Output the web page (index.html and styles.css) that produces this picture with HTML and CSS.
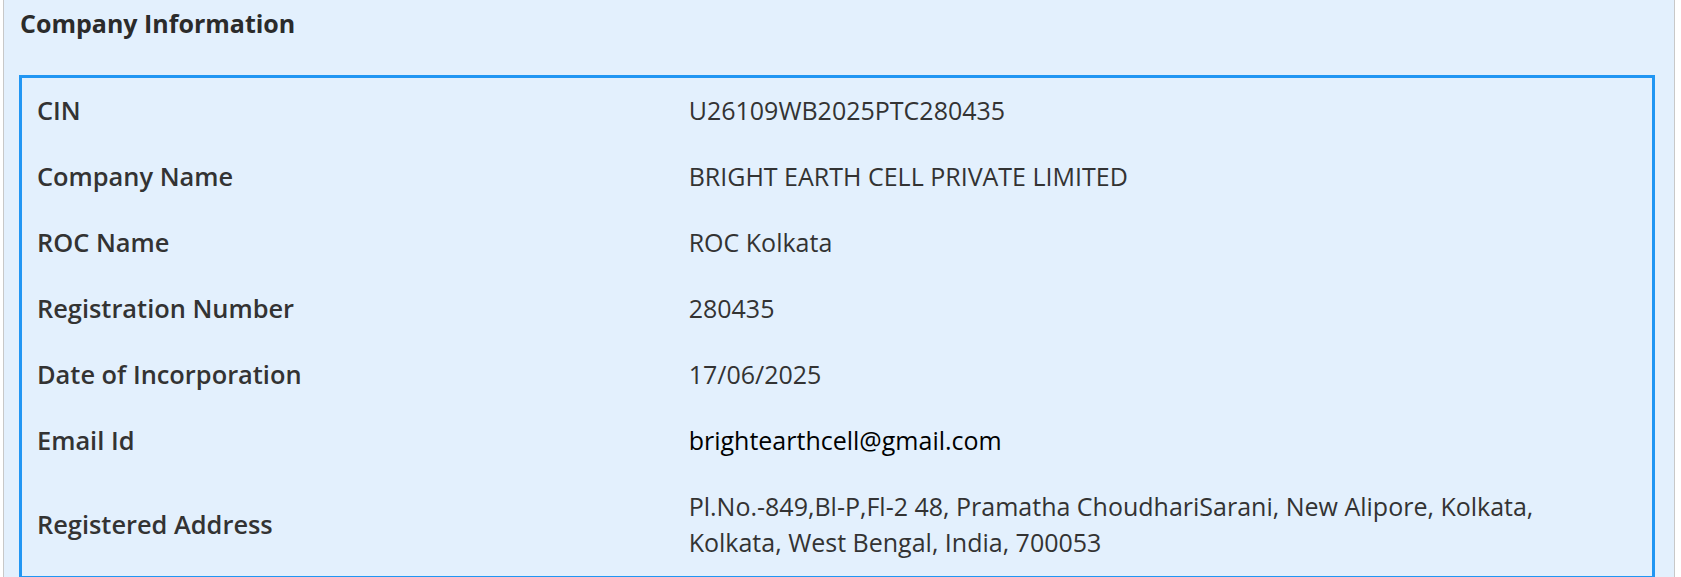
FILE: index.html
```html
<!DOCTYPE html>
<html lang="en">
<head>
  <meta charset="UTF-8">
  <title>Company Information</title>
  <link rel="stylesheet" href="styles.css">
</head>
<body>
<div class="panel">
  <h2 class="panel-title">Company Information</h2>
  <table class="info-table">
    <tr><th>CIN</th><td>U26109WB2025PTC280435</td></tr>
    <tr><th>Company Name</th><td>BRIGHT EARTH CELL PRIVATE LIMITED</td></tr>
    <tr><th>ROC Name</th><td>ROC Kolkata</td></tr>
    <tr><th>Registration Number</th><td>280435</td></tr>
    <tr><th>Date of Incorporation</th><td>17/06/2025</td></tr>
    <tr><th>Email Id</th><td class="email">brightearthcell@gmail.com</td></tr>
    <tr><th>Registered Address</th><td>Pl.No.-849,Bl-P,Fl-2 48, Pramatha ChoudhariSarani, New Alipore, Kolkata, Kolkata, West Bengal, India, 700053</td></tr>
  </table>
</div>
</body>
</html>
```

FILE: styles.css
```css
body {
  margin: 0;
  font-family: "Open Sans", sans-serif;
  background-color: #ffffff;
}
.panel {
  margin: 0 6px 0 3px;
  padding: 7px 19px 20px 15px;
  background-color: #e3f0fd;
  border-left: 1px solid #c8c8c8;
  border-right: 1px solid #c8c8c8;
}
.panel-title {
  margin: 0 0 35px 1px;
  font-size: 25px;
  line-height: 33px;
  font-weight: 700;
  color: #2b2b2b;
}
.info-table {
  width: 100%;
  border-collapse: collapse;
  border: 3px solid #2196f3;
}
.info-table th,
.info-table td {
  padding: 14px 15px 16px;
  line-height: 36px;
  text-align: left;
  vertical-align: middle;
  color: #333333;
}
.info-table th {
  width: 40%;
  font-size: 25.4px;
  font-weight: 600;
}
.info-table td {
  padding-right: 50px;
  font-size: 25px;
  font-weight: 400;
}
.info-table .email {
  color: #000000;
}
```
